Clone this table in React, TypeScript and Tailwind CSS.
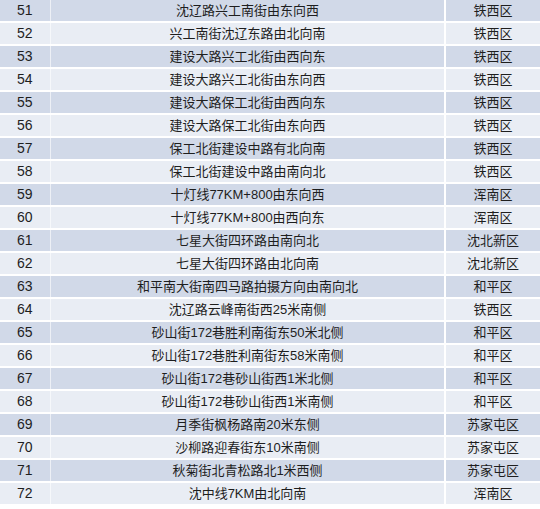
const rows: [number, string, string][] = [
  [51, "沈辽路兴工南街由东向西", "铁西区"],
  [52, "兴工南街沈辽东路由北向南", "铁西区"],
  [53, "建设大路兴工北街由西向东", "铁西区"],
  [54, "建设大路兴工北街由东向西", "铁西区"],
  [55, "建设大路保工北街由西向东", "铁西区"],
  [56, "建设大路保工北街由东向西", "铁西区"],
  [57, "保工北街建设中路有北向南", "铁西区"],
  [58, "保工北街建设中路由南向北", "铁西区"],
  [59, "十灯线77KM+800由东向西", "浑南区"],
  [60, "十灯线77KM+800由西向东", "浑南区"],
  [61, "七星大街四环路由南向北", "沈北新区"],
  [62, "七星大街四环路由北向南", "沈北新区"],
  [63, "和平南大街南四马路拍摄方向由南向北", "和平区"],
  [64, "沈辽路云峰南街西25米南侧", "铁西区"],
  [65, "砂山街172巷胜利南街东50米北侧", "和平区"],
  [66, "砂山街172巷胜利南街东58米南侧", "和平区"],
  [67, "砂山街172巷砂山街西1米北侧", "和平区"],
  [68, "砂山街172巷砂山街西1米南侧", "和平区"],
  [69, "月季街枫杨路南20米东侧", "苏家屯区"],
  [70, "沙柳路迎春街东10米南侧", "苏家屯区"],
  [71, "秋菊街北青松路北1米西侧", "苏家屯区"],
  [72, "沈中线7KM由北向南", "浑南区"],
];

export default function App() {
  return (
    <div
      className="w-[540px] h-[509px] bg-white overflow-hidden text-[#1e1e1e]"
      style={{ fontFamily: '"Liberation Sans", "Noto Sans CJK SC", sans-serif' }}
    >
      <div className="flex flex-col gap-[2px]">
        {rows.map(([n, road, area], i) => (
          <div
            key={n}
            className={`flex h-[21px] gap-[2px] ${i % 2 === 0 ? "bg-[#d1d9e8]" : "bg-[#e9edf4]"}`}
          >
            <div className="w-[48px] pl-[17px] text-[14px] leading-[21px]">{n}</div>
            <div className="w-[1px] bg-white/60" />
            <div className="flex-1 text-center text-[13px] leading-[21px]">{road}</div>
            <div className="w-[96px] text-center text-[13px] leading-[21px] border-l-2 border-white">
              {area}
            </div>
          </div>
        ))}
      </div>
    </div>
  );
}
